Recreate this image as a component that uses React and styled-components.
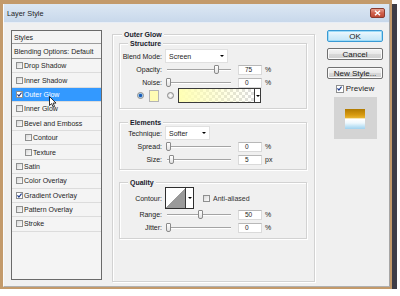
import React from 'react';
import styled, { createGlobalStyle } from 'styled-components';

const GlobalStyle = createGlobalStyle`
  html, body { margin: 0; padding: 0; background: #fff; }
  body { font-family: "Liberation Sans", Arial, sans-serif; color: #1e1e1e; }
`;

const Frame = styled.div`
  box-sizing: border-box;
  width: 392px;
  height: 289px;
  padding: 4px 2px 2px 3px;
  background: #c39a6b;
  box-shadow: 5px 4px 0 #3e3d46;
`;

const Window = styled.div`
  box-sizing: border-box;
  display: flex;
  flex-direction: column;
  height: 100%;
  background: #f0f0f0;
  border-left: 1px solid #fbfbfb;
  border-right: 1px solid #a6a6a6;
  border-bottom: 1px solid #b0b0b0;
`;

const TitleBar = styled.div`
  display: flex;
  align-items: center;
  justify-content: space-between;
  height: 18px;
  padding: 0 4px 0 3px;
  background: linear-gradient(#dce7f3, #c8d8eb);
  border-bottom: 1px solid #e8eef6;
`;

const Title = styled.span`
  font-size: 7.3px;
  color: #1e1e1e;
`;

const CloseButton = styled.div`
  box-sizing: border-box;
  width: 15px;
  height: 10px;
  display: flex;
  align-items: center;
  justify-content: center;
  border: 1px solid #8a3a2e;
  border-radius: 2px;
  background: linear-gradient(#e8a090, #d0604c 50%, #c04a36);
`;

const Body = styled.div`
  flex: 1;
  display: flex;
  align-items: flex-start;
  padding: 7px 6px 0 7px;
`;

const StylesPanel = styled.div`
  position: relative;
  box-sizing: border-box;
  width: 91px;
  height: 250px;
  flex: none;
  border: 1px solid #6a6a6a;
  background: #f4f4f4;
`;

const StyleRow = styled.div`
  box-sizing: border-box;
  display: flex;
  align-items: center;
  gap: 1px;
  height: ${p => p.$h || 14.4}px;
  padding-left: ${p => (p.$header ? 2 : p.$indent ? 13 : 4)}px;
  border-bottom: 1px solid ${p => (p.$header ? '#9c9c9c' : '#dcdcdc')};
  background: ${p => (p.$selected ? '#3399ff' : 'transparent')};
  color: ${p => (p.$selected ? '#fff' : '#1e1e1e')};
  font-size: 7px;
  white-space: nowrap;
`;

const Box = styled.span`
  box-sizing: border-box;
  flex: none;
  width: ${p => p.$size || 7}px;
  height: ${p => p.$size || 7}px;
  display: flex;
  align-items: center;
  justify-content: center;
  border: 1px solid #8e8f8f;
  background: ${p => (p.$checked ? '#fff' : 'linear-gradient(135deg, #d8d8d8, #fcfcfc)')};
`;

const Cursor = styled.svg`
  position: absolute;
  left: 37px;
  top: 65px;
`;

const MainGroup = styled.div`
  box-sizing: border-box;
  flex: none;
  width: 203px;
  height: 248px;
  margin: 4px 0 0 10px;
  padding: 0 7px 0 6px;
  border: 1px solid #d2d2d2;
  box-shadow: inset 1px 1px 0 #fff, 1px 1px 0 #fff;
`;

const SubGroup = styled.div`
  margin-top: ${p => p.$mt}px;
  padding-bottom: ${p => p.$pb}px;
  border: 1px solid #d2d2d2;
  box-shadow: inset 1px 1px 0 #fff, 1px 1px 0 #fff;
`;

const GroupTitle = styled.div`
  width: fit-content;
  margin: -5px 0 ${p => p.$mb || 0}px ${p => p.$indent}px;
  padding: 0 2px;
  background: #f0f0f0;
  font-size: 7px;
  font-weight: bold;
  line-height: 9px;
  color: #18202c;
`;

const FieldRow = styled.div`
  display: flex;
  align-items: center;
  height: ${p => p.$h || 13}px;
  margin-top: ${p => p.$mt || 0}px;
  font-size: 7px;
`;

const Label = styled.span`
  flex: none;
  width: 42px;
  margin-right: 3px;
  text-align: right;
  white-space: nowrap;
  color: #222;
`;

const Select = styled.div`
  box-sizing: border-box;
  width: ${p => p.$w}px;
  height: 14px;
  display: flex;
  align-items: center;
  justify-content: space-between;
  padding: 0 3px;
  background: #fff;
  border: 1px solid #e0e0e0;
`;

const Caret = styled.span`
  width: 0;
  height: 0;
  border-left: 2px solid transparent;
  border-right: 2px solid transparent;
  border-top: 2px solid #000;
`;

const Slider = styled.div`
  position: relative;
  flex: none;
  width: 67px;
  height: 13px;
  margin-right: 6px;
  &::before {
    content: '';
    position: absolute;
    left: 2px;
    right: 1px;
    top: 6px;
    height: 1px;
    background: #a4a4a4;
    box-shadow: 0 1px 0 #fff;
  }
`;

const Thumb = styled.span`
  position: absolute;
  top: 2px;
  box-sizing: border-box;
  width: 5px;
  height: 9px;
  border: 1px solid #8a8a8a;
  border-radius: 1px 1px 2px 2px;
  background: linear-gradient(#ffffff, #e2e2e2);
`;

const NumberBox = styled.span`
  box-sizing: border-box;
  flex: none;
  width: 24px;
  height: 10px;
  margin-right: 3px;
  padding-left: 6px;
  line-height: 8px;
  font-size: 6.5px;
  background: #fff;
  border: 1px solid #dadada;
  border-top-color: #b8b8b8;
`;

const Radio = styled.span`
  box-sizing: border-box;
  flex: none;
  width: 7px;
  height: 7px;
  margin-left: ${p => p.$ml}px;
  border-radius: 50%;
  border: 1px solid #8a8a8a;
  background: ${p =>
    p.$on
      ? 'radial-gradient(circle, #1d5ab4 0 1.3px, #7cc0ee 1.9px, #e8e8e8 2.5px)'
      : 'radial-gradient(circle, #ffffff, #d0d0d0)'};
`;

const Swatch = styled.span`
  box-sizing: border-box;
  flex: none;
  width: 10px;
  height: 12px;
  margin-left: 5px;
  background: #fffcb4;
  border: 1px solid #b4b4b4;
`;

const GradientPicker = styled.div`
  display: flex;
  margin-left: 4px;
  height: 13px;
  border: 1px solid #3a3a3a;
`;

const GradientBar = styled.span`
  width: 75px;
  background:
    linear-gradient(to right, #ffffb4, rgba(255, 255, 190, 0)),
    repeating-conic-gradient(#dcdcdc 0 25%, #ffffff 0 50%) 0 0 / 6px 6px;
`;

const DropPart = styled.span`
  width: ${p => p.$w}px;
  display: flex;
  align-items: center;
  justify-content: center;
  background: #fff;
  border-left: 1px solid #3a3a3a;
`;

const ContourPicker = styled.div`
  display: flex;
  height: 20px;
  border: 1px solid #2e2e2e;
`;

const ContourSwatch = styled.span`
  width: 19px;
  background: linear-gradient(to bottom right, #ffffff 50%, #9a9a9a 50%);
`;

const CheckLabel = styled.span`
  display: flex;
  align-items: center;
  gap: 3px;
  margin-left: 9px;
  color: #333;
`;

const ButtonColumn = styled.div`
  flex: none;
  width: 56px;
  margin-left: 12px;
  display: flex;
  flex-direction: column;
`;

const Button = styled.div`
  box-sizing: border-box;
  height: 12px;
  margin-top: ${p => p.$mt || 0}px;
  display: flex;
  align-items: center;
  justify-content: center;
  font-size: 8px;
  color: #1a1a1a;
  border-radius: 2px;
  border: 1px solid ${p => (p.$default ? '#3a9ad4' : '#707070')};
  box-shadow: ${p => (p.$default ? 'inset 0 0 0 1px #9edcf8' : 'inset 0 0 0 1px #fbfbfb')};
  background: ${p =>
    p.$default
      ? 'linear-gradient(#f0f9fe, #d6eefa 50%, #c4e6f8)'
      : 'linear-gradient(#f4f4f4, #e8e8e8 50%, #d8d8d8 51%, #cfcfcf)'};
`;

const PreviewToggle = styled.div`
  display: flex;
  align-items: center;
  justify-content: center;
  gap: 2px;
  height: 9px;
  margin-top: 5px;
  font-size: 8px;
`;

const PreviewBox = styled.div`
  align-self: center;
  width: 43px;
  height: 42px;
  margin-top: 4px;
  display: flex;
  align-items: center;
  justify-content: center;
  background: #d4d4d4;
`;

const PreviewChip = styled.div`
  width: 20px;
  height: 20px;
  margin-top: 2px;
  background: linear-gradient(
    #b07a00 0%,
    #d89a10 30%,
    #e8b430 44%,
    #f4e2b0 47%,
    #ffffff 52%,
    #eef8fd 70%,
    #b6def4 90%,
    #a2d2ee 100%
  );
`;

const CheckMark = ({ color = '#1c3a8c' }) => (
  <svg width="5" height="5" viewBox="0 0 5 5">
    <path d="M0.4 2.4 L1.9 4 L4.6 0.6" fill="none" stroke={color} strokeWidth="1.2" />
  </svg>
);

const Check = ({ checked, size }) => (
  <Box $checked={checked} $size={size}>
    {checked && <CheckMark />}
  </Box>
);

const SliderField = ({ label, value, unit }) => (
  <FieldRow>
    <Label>{label}</Label>
    <Slider>
      <Thumb style={{ left: 0.5 + value * 0.64 }} />
    </Slider>
    <NumberBox>{value}</NumberBox>
    <span>{unit}</span>
  </FieldRow>
);

const styleItems = [
  { name: 'Drop Shadow' },
  { name: 'Inner Shadow' },
  { name: 'Outer Glow', checked: true, selected: true },
  { name: 'Inner Glow' },
  { name: 'Bevel and Emboss' },
  { name: 'Contour', indent: true },
  { name: 'Texture', indent: true },
  { name: 'Satin' },
  { name: 'Color Overlay' },
  { name: 'Gradient Overlay', checked: true },
  { name: 'Pattern Overlay' },
  { name: 'Stroke' },
];

export default function App() {
  return (
    <>
      <GlobalStyle />
      <Frame>
        <Window>
          <TitleBar>
            <Title>Layer Style</Title>
            <CloseButton>
              <svg width="7" height="6" viewBox="0 0 7 6">
                <path d="M1 0.8 L6 5.2 M6 0.8 L1 5.2" stroke="#fff" strokeWidth="1.5" />
              </svg>
            </CloseButton>
          </TitleBar>
          <Body>
            <StylesPanel>
              <StyleRow $header $h={13}>Styles</StyleRow>
              <StyleRow $header $h={15}>Blending Options: Default</StyleRow>
              {styleItems.map((item, index) => (
                <StyleRow key={index} $indent={item.indent} $selected={item.selected}>
                  <Check checked={item.checked} />
                  {item.name}
                </StyleRow>
              ))}
              <Cursor width="8" height="12" viewBox="0 0 8 12">
                <path
                  d="M0.5 0.5 L0.5 9.5 L2.6 7.6 L4.2 11 L5.6 10.4 L4.1 7.1 L7 7.1 Z"
                  fill="#fff"
                  stroke="#000"
                  strokeWidth="0.8"
                />
              </Cursor>
            </StylesPanel>

            <MainGroup>
              <GroupTitle $indent={3}>Outer Glow</GroupTitle>
              <SubGroup $mt={4} $pb={6}>
                <GroupTitle $indent={8}>Structure</GroupTitle>
                <FieldRow $h={14} $mt={1}>
                  <Label>Blend Mode:</Label>
                  <Select $w={63}>
                    Screen
                    <Caret />
                  </Select>
                </FieldRow>
                <SliderField label="Opacity:" value={75} unit="%" />
                <SliderField label="Noise:" value={0} unit="%" />
                <FieldRow>
                  <Radio $on $ml={17} />
                  <Swatch />
                  <Radio $ml={8} />
                  <GradientPicker>
                    <GradientBar />
                    <DropPart $w={5}>
                      <Caret />
                    </DropPart>
                  </GradientPicker>
                </FieldRow>
              </SubGroup>

              <SubGroup $mt={13} $pb={3}>
                <GroupTitle $indent={8}>Elements</GroupTitle>
                <FieldRow $h={14} $mt={-1}>
                  <Label>Technique:</Label>
                  <Select $w={45}>
                    Softer
                    <Caret />
                  </Select>
                </FieldRow>
                <SliderField label="Spread:" value={0} unit="%" />
                <SliderField label="Size:" value={5} unit="px" />
              </SubGroup>

              <SubGroup $mt={12} $pb={4}>
                <GroupTitle $indent={8}>Quality</GroupTitle>
                <FieldRow $h={20} $mt={1}>
                  <Label>Contour:</Label>
                  <ContourPicker>
                    <ContourSwatch />
                    <DropPart $w={7}>
                      <Caret />
                    </DropPart>
                  </ContourPicker>
                  <CheckLabel>
                    <Check />
                    Anti-aliased
                  </CheckLabel>
                </FieldRow>
                <SliderField label="Range:" value={50} unit="%" />
                <SliderField label="Jitter:" value={0} unit="%" />
              </SubGroup>
            </MainGroup>

            <ButtonColumn>
              <Button $default>OK</Button>
              <Button $mt={6}>Cancel</Button>
              <Button $mt={7}>New Style...</Button>
              <PreviewToggle>
                <Check checked size={8} />
                Preview
              </PreviewToggle>
              <PreviewBox>
                <PreviewChip />
              </PreviewBox>
            </ButtonColumn>
          </Body>
        </Window>
      </Frame>
    </>
  );
}
